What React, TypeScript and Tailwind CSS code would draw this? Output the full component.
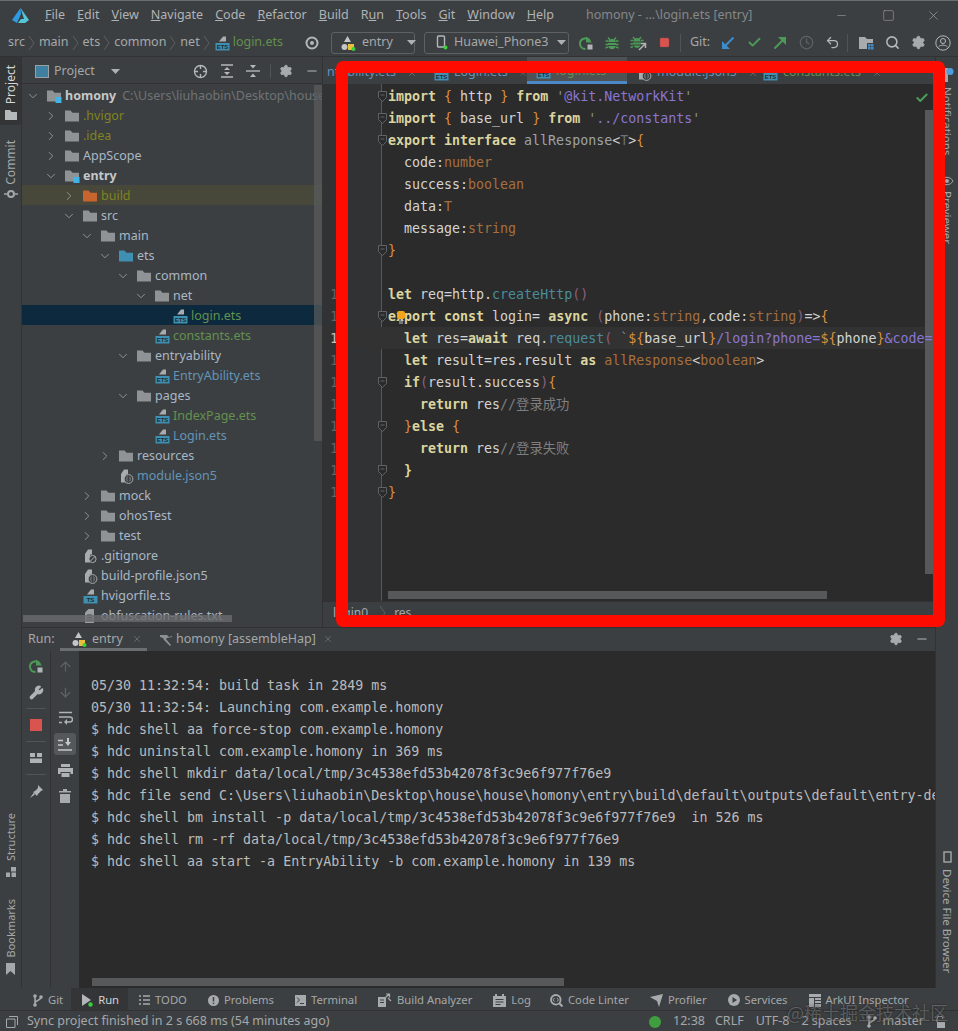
import type { ReactNode } from "react";
import {
  Check,
  ChevronDown,
  ChevronRight,
  Clock,
  Minus,
  Search,
  Settings,
  Undo2,
  X,
  Wrench,
  ArrowUp,
  ArrowDown,
  Square,
} from "lucide-react";

const uiFont = "[font-family:'Noto_Sans','Liberation_Sans',sans-serif]";
const monoFont =
  "[font-family:'DejaVu_Sans_Mono','Noto_Sans_CJK_SC',monospace]";

const Folder = ({ color = "#8f9396", badge }: { color?: string; badge?: boolean }) => (
  <svg width="16" height="14" viewBox="0 0 16 14" className="shrink-0">
    <path d="M1 1.5h5.5l2 2.2H15v8.8H1z" fill={color} />
    {badge && <rect x="9.5" y="8" width="6" height="6" fill="#3fb4e5" />}
  </svg>
);

const EtsIcon = ({ label = "ETS" }: { label?: string }) => (
  <svg width="15" height="16" viewBox="0 0 15 16" className="shrink-0">
    <path d="M4 6.5 8 1.5h3v5z" fill="#a8acae" />
    <rect x="0.5" y="8" width="14" height="7.5" fill="#3f8fb2" />
    <text x="7.5" y="14" textAnchor="middle" fontSize="6" fontWeight="700" fill="#1f2a30" fontFamily="Liberation Sans">
      {label}
    </text>
  </svg>
);

const JsonIcon = () => (
  <svg width="15" height="16" viewBox="0 0 15 16" className="shrink-0">
    <path d="M2 6 5 1.5h4v5H7v8H2z" fill="#a8acae" />
    <circle cx="9.5" cy="11" r="4.4" fill="#3c3f41" stroke="#a8acae" strokeWidth="1" />
    <path d="M8.5 8.8c-1 0-.4 2.2-1 2.2.6 0 0 2.2 1 2.2M10.5 8.8c1 0 .4 2.2 1 2.2-.6 0 0 2.2-1 2.2" fill="none" stroke="#a8acae" strokeWidth=".7" />
  </svg>
);

const IgnoreIcon = () => (
  <svg width="15" height="16" viewBox="0 0 15 16" className="shrink-0">
    <path d="M2 6 5 1.5h4v5H7v8H2z" fill="#a8acae" />
    <circle cx="9.5" cy="11" r="3.6" fill="#3c3f41" stroke="#a8acae" strokeWidth="1" />
    <path d="m7 13.5 5-5" stroke="#a8acae" />
  </svg>
);

const TxtIcon = () => (
  <svg width="14" height="16" viewBox="0 0 14 16" className="shrink-0">
    <path d="M2 4.5 5.5 1H11v14H2z" fill="#9b9fa1" />
    <path d="M4 7h5M4 9.5h5M4 12h5" stroke="#3c3f41" />
  </svg>
);

const ChevronSep = () => (
  <svg width="8" height="16" viewBox="0 0 8 16" className="mx-[3px] shrink-0">
    <path d="m1 1 5 7-5 7" fill="none" stroke="#5c6063" />
  </svg>
);

const RerunIcon = () => (
  <svg width="16" height="16" viewBox="0 0 16 16">
    <path d="M12 6.2A5.3 5.3 0 1 0 7.5 14" fill="none" stroke="#4c9a58" strokeWidth="2" />
    <path d="M8 1.5v6h6z" fill="#4c9a58" />
    <rect x="9.5" y="9.5" width="5" height="5" fill="#b0b3b5" />
  </svg>
);

const BugIcon = () => (
  <svg width="16" height="16" viewBox="0 0 16 16">
    <ellipse cx="8" cy="9" rx="4.3" ry="5.2" fill="#4c9a58" />
    <path d="M4 2.5 6 5M12 2.5 10 5M1.5 6H4M1.5 9.5H4M1.5 13 4 12M14.5 6H12M14.5 9.5H12M14.5 13 12 12" stroke="#4c9a58" strokeWidth="1.4" />
    <path d="M4 7.5h8M4 10.5h8" stroke="#3c3f41" />
  </svg>
);

const ProfileBugIcon = () => (
  <svg width="17" height="16" viewBox="0 0 17 16">
    <ellipse cx="7" cy="8" rx="4" ry="5" fill="#4c9a58" />
    <path d="M3 2 5 4.500M11 2 9 4.500M0.500 5.500H3M0.500 9H3M0.500 12.500 3 11.500M13.500 5.500H11" stroke="#4c9a58" strokeWidth="1.400" />
    <path d="M3 7h8M3 10h8" stroke="#3c3f41" />
    <path d="m9 15 6-6M11 8.500h4.500V13" fill="none" stroke="#b0b3b5" strokeWidth="1.500" />
  </svg>
);

const GearIcon = ({ size = 15 }: { size?: number }) => (
  <Settings size={size} fill="#a8abad" stroke="#a8abad" strokeWidth={1.5} className="shrink-0" />
);

const ComboCaret = () => (
  <svg width="9" height="5" viewBox="0 0 9 5" className="shrink-0">
    <path d="M0 0h9L4.500 5z" fill="#aeb1b3" />
  </svg>
);

const EntryIcon = () => (
  <svg width="15" height="16" viewBox="0 0 15 16" className="shrink-0">
    <path d="M6.500 1 10 7H3z" fill="#c3c5c7" />
    <circle cx="3.500" cy="12" r="3" fill="#c3c5c7" />
    <rect x="7" y="9" width="6" height="6" fill="#e8bf3c" />
    <circle cx="12.500" cy="14" r="2" fill="#39d03b" />
  </svg>
);

const VerticalText = ({
  children,
  up = true,
  bright,
  size = "text-[12px]",
}: {
  children: ReactNode;
  up?: boolean;
  bright?: boolean;
  size?: string;
}) => (
  <span
    className={`[writing-mode:vertical-rl] whitespace-nowrap leading-[14px] ${size} ${
      up ? "rotate-180" : ""
    } ${bright ? "text-[#d4d6d8]" : "text-[#a5a8aa]"}`}
  >
    {children}
  </span>
);

const LeftStrip = () => (
  <div className="flex h-full w-[22px] shrink-0 flex-col items-center border-r border-[#323232]">
    <div className="flex h-[68px] w-full flex-col items-center bg-[#333537] pt-[8px]">
      <VerticalText bright>Project</VerticalText>
      <svg width="14" height="12" viewBox="0 0 14 12" className="mt-[5px]">
        <path d="M1 1h5l1.500 2H13v8H1z" fill="#b6b9bb" />
      </svg>
    </div>
    <div className="mt-[15px] flex flex-col items-center">
      <VerticalText>Commit</VerticalText>
      <svg width="14" height="10" viewBox="0 0 14 10" className="mt-[4px]">
        <circle cx="7" cy="5" r="3" fill="none" stroke="#a5a8aa" strokeWidth="2" />
        <path d="M0 5h3M11 5h3" stroke="#a5a8aa" strokeWidth="1.500" />
      </svg>
    </div>
    <div className="mt-auto mb-[13px] flex flex-col items-center">
      <VerticalText size="text-[11px]">Structure</VerticalText>
      <svg width="12" height="10" viewBox="0 0 12 10" className="mt-[6px]">
        <path d="M6 0h5v4.500H6zM1 5.500h4V10H1zM6.500 5.500H11V10H6.500z" fill="#a5a8aa" />
      </svg>
      <div className="mt-[22px] flex">
        <VerticalText size="text-[11px]">Bookmarks</VerticalText>
      </div>
      <svg width="11" height="12" viewBox="0 0 11 12" className="mt-[6px]">
        <path d="M1 0h9v12L5.500 8 1 12z" fill="#a5a8aa" />
      </svg>
    </div>
  </div>
);

const RightStrip = () => (
  <div className="flex h-full w-[23px] shrink-0 flex-col items-center border-l border-[#323232] pt-[11px]">
    <svg width="14" height="14" viewBox="0 0 14 14">
      <path d="M1 4 4 0h4v14H1z" fill="#a5a8aa" />
      <circle cx="10" cy="3.500" r="3.500" fill="#4d9ee0" />
    </svg>
    <div className="mt-[5px] flex">
      <VerticalText up={false} size="text-[11.5px]">Notifications</VerticalText>
    </div>
    <svg width="14" height="10" viewBox="0 0 14 10" className="mt-[21px]">
      <path d="M1 5c3-5 9-5 12 0-3 5-9 5-12 0z" fill="none" stroke="#a5a8aa" />
      <circle cx="7" cy="5" r="2" fill="#a5a8aa" />
    </svg>
    <div className="mt-[5px] flex">
      <VerticalText up={false} size="text-[11.5px]">Previewer</VerticalText>
    </div>
    <div className="mt-auto mb-[15px] flex flex-col items-center">
      <svg width="9" height="12" viewBox="0 0 9 12">
        <rect x="1" y="1" width="7" height="10" fill="none" stroke="#a5a8aa" strokeWidth="1.400" />
      </svg>
      <div className="mt-[6px] flex">
        <VerticalText up={false} size="text-[11.5px]">Device File Browser</VerticalText>
      </div>
    </div>
  </div>
);

type TreeItem = {
  name: string;
  level: number;
  open?: boolean;
  icon: ReactNode;
  color?: string;
  bold?: boolean;
  hint?: string;
  rowBg?: string;
};

const grayFolder = <Folder />;
const ignored = "text-[#7f8420]";
const green = "text-[#62914f]";
const blue = "text-[#6394b8]";

const tree: TreeItem[] = [
  { name: "homony", level: 0, open: true, icon: <Folder badge />, bold: true, hint: "C:\\Users\\liuhaobin\\Desktop\\house\\house\\homony" },
  { name: ".hvigor", level: 1, open: false, icon: grayFolder, color: ignored },
  { name: ".idea", level: 1, open: false, icon: grayFolder, color: ignored },
  { name: "AppScope", level: 1, open: false, icon: grayFolder },
  { name: "entry", level: 1, open: true, icon: <Folder badge />, bold: true },
  { name: "build", level: 2, open: false, icon: <Folder color="#c8652f" />, color: ignored, rowBg: "bg-[#47473a]" },
  { name: "src", level: 2, open: true, icon: grayFolder },
  { name: "main", level: 3, open: true, icon: grayFolder },
  { name: "ets", level: 4, open: true, icon: <Folder color="#3f8fb2" /> },
  { name: "common", level: 5, open: true, icon: grayFolder },
  { name: "net", level: 6, open: true, icon: grayFolder },
  { name: "login.ets", level: 7, icon: <EtsIcon />, color: green, rowBg: "bg-[#0d293e]" },
  { name: "constants.ets", level: 6, icon: <EtsIcon />, color: green },
  { name: "entryability", level: 5, open: true, icon: grayFolder },
  { name: "EntryAbility.ets", level: 6, icon: <EtsIcon />, color: blue },
  { name: "pages", level: 5, open: true, icon: grayFolder },
  { name: "IndexPage.ets", level: 6, icon: <EtsIcon />, color: green },
  { name: "Login.ets", level: 6, icon: <EtsIcon />, color: blue },
  { name: "resources", level: 4, open: false, icon: grayFolder },
  { name: "module.json5", level: 4, icon: <JsonIcon />, color: blue },
  { name: "mock", level: 3, open: false, icon: grayFolder },
  { name: "ohosTest", level: 3, open: false, icon: grayFolder },
  { name: "test", level: 3, open: false, icon: grayFolder },
  { name: ".gitignore", level: 2, icon: <IgnoreIcon /> },
  { name: "build-profile.json5", level: 2, icon: <JsonIcon /> },
  { name: "hvigorfile.ts", level: 2, icon: <EtsIcon label="TS" /> },
  { name: "obfuscation-rules.txt", level: 2, icon: <TxtIcon /> },
];

const TreeRow = ({ item }: { item: TreeItem }) => (
  <div
    className={`flex h-[20px] items-center whitespace-nowrap pt-[2px] text-[12.5px] ${item.rowBg ?? ""}`}
    style={{ paddingLeft: 2 + item.level * 18 }}
  >
    <span className="flex w-[18px] shrink-0 justify-center text-[#9a9ea1]">
      {item.open === true && <ChevronDown size={14} strokeWidth={1.5} />}
      {item.open === false && <ChevronRight size={14} strokeWidth={1.5} />}
    </span>
    <span className="ml-[5px] flex w-[14px] shrink-0 justify-center">{item.icon}</span>
    <span className={`ml-[4px] ${item.bold ? "font-bold text-[#c5c7c9]" : ""} ${item.color ?? (item.bold ? "" : "text-[#a9b7c6]")}`}>
      {item.name}
    </span>
    {item.hint && <span className="ml-[6px] text-[#6f7375]">{item.hint}</span>}
  </div>
);

const ProjectPanel = () => (
  <div className="relative flex h-full w-[301px] shrink-0 flex-col overflow-hidden border-r border-[#323232]">
    <div className="flex h-[27px] shrink-0 items-center border-b border-[#323232] pl-[13px] pt-[2px] text-[12.5px] text-[#a5a8aa]">
      <svg width="14" height="13" viewBox="0 0 14 13" className="shrink-0">
        <rect x=".5" y=".5" width="13" height="12" fill="#3f7fa0" stroke="#9aa0a3" />
      </svg>
      <span className="ml-[5px]">Project</span>
      <span className="ml-[16px]">
        <ComboCaret />
      </span>
      <svg width="15" height="15" viewBox="0 0 15 15" className="ml-[73px] shrink-0">
        <circle cx="7.500" cy="7.500" r="6" fill="none" stroke="#b4b7b9" strokeWidth="1.400" />
        <path d="M7.500 1v4M7.500 10v4M1 7.500h4M10 7.500h4" stroke="#b4b7b9" strokeWidth="1.400" />
      </svg>
      <svg width="14" height="14" viewBox="0 0 14 14" className="ml-[12px] shrink-0">
        <path d="M1 1h12M1 13h12" stroke="#b4b7b9" strokeWidth="1.400" />
        <path d="m4 6 3-3 3 3zM4 8l3 3 3-3z" fill="#b4b7b9" />
      </svg>
      <svg width="14" height="14" viewBox="0 0 14 14" className="ml-[12px] shrink-0">
        <path d="M0 7h14" stroke="#b4b7b9" strokeWidth="1.400" />
        <path d="m4 1 3 3.500L10 1zM4 13l3-3.500L10 13z" fill="#b4b7b9" />
      </svg>
      <span className="ml-[10px] h-[14px] w-px bg-[#515456]" />
      <span className="ml-[8px]">
        <GearIcon size={14} />
      </span>
      <Minus size={14} className="ml-[12px] shrink-0 text-[#b4b7b9]" />
    </div>
    <div className="flex flex-col pt-[1px]">
      {tree.map((item) => (
        <TreeRow key={item.name} item={item} />
      ))}
    </div>
    <div className="absolute right-0 top-[28px] h-[356px] w-[8px] bg-[#5a5c5e]/70" />
    <div className="absolute bottom-[5px] left-[1px] h-[7px] w-[209px] bg-[#6a6c6e]/80" />
  </div>
);

const tabs = [
  { name: "ntAbility.ets", w: "w-[107px] pl-[4px]", color: "text-[#6394b8]", icon: null },
  { name: "Login.ets", w: "w-[97px] pl-[4px]", color: "text-[#6394b8]", icon: <EtsIcon /> },
  { name: "login.ets", w: "w-[100px] pl-[9px]", color: "text-[#62914f]", icon: <EtsIcon />, active: true },
  { name: "module.json5", w: "w-[132px] pl-[10px]", color: "text-[#6394b8]", icon: <JsonIcon /> },
  { name: "constants.ets", w: "w-[136px] pl-[4px]", color: "text-[#62914f]", icon: <EtsIcon /> },
];

const kw = "font-bold text-[#dcd49f]";
const plain = "text-[#d4d4d4]";
const brace = "text-[#d98f3c]";
const str = "text-[#8a76d2]";
const quote = "text-[#8a8f93]";
const type = "text-[#a5703f]";
const fn = "text-[#4a8c9c]";
const paren = "text-[#8f5f7c]";
const muted = "text-[#9ea3a8]";
const note = "text-[#7f7f7f]";

type Tok = [string, string];

const code: { toks: Tok[]; fold?: boolean }[] = [
  { fold: true, toks: [["import", kw], [" ", plain], ["{", brace], [" http ", plain], ["}", brace], [" ", plain], ["from", kw], [" ", plain], ["'", quote], ["@kit.NetworkKit", str], ["'", quote]] },
  { fold: true, toks: [["import", kw], [" ", plain], ["{", brace], [" base_url ", plain], ["}", brace], [" ", plain], ["from", kw], [" ", plain], ["'", quote], ["../constants", str], ["'", quote]] },
  { fold: true, toks: [["export interface", kw], [" allResponse", muted], ["<", plain], ["T", "text-[#6a7075]"], [">", plain], ["{", brace]] },
  { toks: [["  code:", plain], ["number", type]] },
  { toks: [["  success:", plain], ["boolean", type]] },
  { toks: [["  data:", plain], ["T", type]] },
  { toks: [["  message:", plain], ["string", type]] },
  { fold: true, toks: [["}", brace]] },
  { toks: [] },
  { toks: [["let", kw], [" req=http.", plain], ["createHttp", fn], ["()", paren]] },
  { fold: true, toks: [["export const", kw], [" login= ", plain], ["async", kw], [" ", plain], ["(", paren], ["phone:", plain], ["string", type], [",code:", plain], ["string", type], [")", paren], ["=>", plain], ["{", brace]] },
  { toks: [["  ", plain], ["let", kw], [" res=", plain], ["await", kw], [" req.", plain], ["request", fn], ["(", paren], [" `", quote], ["${", brace], ["base_url", plain], ["}", brace], ["/login?phone=", str], ["${", brace], ["phone", plain], ["}", brace], ["&code=", str], ["${", brace], ["code", plain], ["}", brace], ["`", quote], [")", paren]] },
  { toks: [["  ", plain], ["let", kw], [" result=res.result ", plain], ["as", kw], [" ", plain], ["allResponse", type], ["<", plain], ["boolean", type], [">", plain]] },
  { fold: true, toks: [["  ", plain], ["if", kw], ["(", paren], ["result.success", plain], [")", paren], ["{", brace]] },
  { toks: [["    ", plain], ["return", kw], [" res", plain], ["//登录成功", note]] },
  { fold: true, toks: [["  ", plain], ["}", brace], ["else", kw], [" ", plain], ["{", brace]] },
  { toks: [["    ", plain], ["return", kw], [" res", plain], ["//登录失败", note]] },
  { fold: true, toks: [["  ", plain], ["}", kw]] },
  { fold: true, toks: [["}", brace]] },
];

const FoldMark = () => (
  <svg width="9" height="11" viewBox="0 0 9 11" className="absolute left-[55px] top-[6px]">
    <path d="M.5 .5h8v6l-4 4-4-4z" fill="#2b2b2b" stroke="#5f6365" />
    <path d="M2.500 4h4" stroke="#5f6365" />
  </svg>
);

const Editor = () => (
  <div className="relative flex h-full min-w-0 flex-1 flex-col overflow-hidden">
    <div className="flex h-[27px] shrink-0 items-center text-[12.5px]">
      {tabs.map((t) => (
        <div
          key={t.name}
          className={`flex h-full shrink-0 items-center gap-[5px] whitespace-nowrap pt-[4px] ${t.w} ${
            t.active ? "border-b-[3px] border-[#4a88c7] bg-[#4e5254]" : ""
          } ${t.color}`}
        >
          {t.icon}
          <span>{t.name}</span>
          {!t.active && <X size={10} className="ml-[6px] text-[#6f7375]" />}
        </div>
      ))}
    </div>
    <div className={`relative flex-1 overflow-hidden bg-[#2b2b2b] text-[13.3px] leading-[22px] ${monoFont}`}>
      <div className="absolute bottom-0 left-0 top-0 w-[59px] border-r border-[#555759] bg-[#303234]" />
      {/* right scrollbar sits under the code, the long line runs over it */}
      <div className="absolute right-[2px] top-[26px] h-[464px] w-[8px] bg-[#565859]" />
      <div className="relative h-[517px] overflow-hidden pt-[1px]">
        {code.map((line, i) => (
          <div key={i} className={`relative mr-[10px] flex h-[22px] whitespace-pre ${i === 11 ? "bg-[#323232]" : ""}`}>
            <span className={`relative top-[1px] w-[23px] shrink-0 text-right ${i === 11 ? "text-[#c0c0c0]" : "text-[#5f6365]"}`}>
              {i + 1}
            </span>
            <span className="w-[42px] shrink-0" />
            {line.fold && <FoldMark />}
            <span className="relative top-[1px]">
              {line.toks.map((t, j) => (
                <span key={j} className={t[1]}>
                  {t[0]}
                </span>
              ))}
            </span>
            {i === 10 && (
              <svg width="10" height="14" viewBox="0 0 10 14" className="absolute left-[73px] top-[5px]">
                <rect x="1" y="1" width="8" height="8" rx="2" fill="#f2a51a" />
                <path d="M3 11h4M3 13h4" stroke="#c4c4c4" />
              </svg>
            )}
          </div>
        ))}
      </div>
      <Check size={14} strokeWidth={3.5} className="absolute right-[6px] top-[7px] text-[#4c9a58]" />
      <div className="absolute bottom-[2px] left-[65px] h-[8px] w-[439px] bg-[#565859]" />
    </div>
    <div className={`flex h-[26px] shrink-0 items-center border-t border-[#323232] pb-[4px] pl-[10px] text-[12px] text-[#a5a8aa] ${uiFont}`}>
      <span>login0</span>
      <span className="ml-[8px] mr-[4px]">
        <ChevronSep />
      </span>
      <span>res</span>
    </div>
  </div>
);

const consoleLines = [
  "05/30 11:32:54: build task in 2849 ms",
  "05/30 11:32:54: Launching com.example.homony",
  "$ hdc shell aa force-stop com.example.homony",
  "$ hdc uninstall com.example.homony in 369 ms",
  "$ hdc shell mkdir data/local/tmp/3c4538efd53b42078f3c9e6f977f76e9",
  "$ hdc file send C:\\Users\\liuhaobin\\Desktop\\house\\house\\homony\\entry\\build\\default\\outputs\\default\\entry-default-signed.hap",
  "$ hdc shell bm install -p data/local/tmp/3c4538efd53b42078f3c9e6f977f76e9  in 526 ms",
  "$ hdc shell rm -rf data/local/tmp/3c4538efd53b42078f3c9e6f977f76e9",
  "$ hdc shell aa start -a EntryAbility -b com.example.homony in 139 ms",
];

const IconSlot = ({ children, selected }: { children: ReactNode; selected?: boolean }) => (
  <div className={`flex h-[26px] w-full items-center justify-center ${selected ? "px-[3px] py-[2px]" : ""}`}>
    <div className={`flex h-full w-full items-center justify-center ${selected ? "rounded-[3px] bg-[#55585a]" : ""}`}>
      {children}
    </div>
  </div>
);

const SlotDivider = () => (
  <div className="flex h-[7px] w-full items-center justify-center">
    <div className="h-px w-[20px] bg-[#515456]" />
  </div>
);

const RunPanel = () => (
  <div className="flex h-[361px] shrink-0 flex-col border-t border-[#323232]">
    <div className="flex h-[23px] shrink-0 items-center pb-[1px] pl-[6px] text-[12.5px] text-[#a5a8aa]">
      <span className="w-[44px]">Run:</span>
      <div className="relative flex h-full w-[76px] shrink-0 items-center gap-[5px]">
        <EntryIcon />
        <span>entry</span>
        <X size={10} className="ml-[4px] text-[#6f7375]" />
        <div className="absolute bottom-[-1px] left-[-12px] h-[3px] w-[87px] bg-[#6b6e70]" />
      </div>
      <svg width="14" height="14" viewBox="0 0 14 14" className="ml-[11px] shrink-0">
        <path d="M1 3h7l2 2 3-1 0 1-5 1-1 1 5 6-1 1-6-6-1-2-3-1z" fill="#8d9092" />
      </svg>
      <span className="ml-[3px] whitespace-nowrap">homony [assembleHap]</span>
      <X size={10} className="ml-[7px] text-[#6f7375]" />
      <span className="ml-auto mr-[12px]">
        <GearIcon size={14} />
      </span>
      <Minus size={14} strokeWidth={2} className="mr-[6px] shrink-0 text-[#b4b7b9]" />
    </div>
    <div className="flex min-h-0 flex-1">
      <div className="flex w-[29px] shrink-0 flex-col items-center border-r border-[#323232] pt-[2px]">
        <IconSlot>
          <RerunIcon />
        </IconSlot>
        <IconSlot>
          <Wrench size={15} fill="#b0b3b5" stroke="#b0b3b5" />
        </IconSlot>
        <SlotDivider />
        <IconSlot>
          <svg width="12" height="12" viewBox="0 0 12 12">
            <rect width="12" height="12" fill="#d9534f" />
          </svg>
        </IconSlot>
        <SlotDivider />
        <IconSlot>
          <svg width="14" height="12" viewBox="0 0 14 12">
            <path d="M1 1h5v4H1zM8 1h5v4H8zM1 6.500h12V11H1z" fill="#b0b3b5" />
          </svg>
        </IconSlot>
        <SlotDivider />
        <IconSlot>
          <svg width="15" height="15" viewBox="0 0 15 15">
            <path d="M9 1l5 5-2 1-3 3-1 2-4-4 2-1 3-3zM4.500 9 1 14l5-3.500z" fill="#b0b3b5" />
          </svg>
        </IconSlot>
      </div>
      <div className="flex w-[28px] shrink-0 flex-col items-center pt-[2px]">
        <IconSlot>
          <ArrowUp size={15} className="text-[#5f6264]" />
        </IconSlot>
        <IconSlot>
          <ArrowDown size={15} className="text-[#5f6264]" />
        </IconSlot>
        <IconSlot>
          <svg width="15" height="14" viewBox="0 0 15 14">
            <path d="M1 1.500h13M1 6h11a2.500 2.500 0 0 1 0 5H8M1 11.500h3" fill="none" stroke="#b0b3b5" strokeWidth="1.500" />
            <path d="M9 8v6l-3-3z" fill="#b0b3b5" />
          </svg>
        </IconSlot>
        <IconSlot selected>
          <svg width="14" height="13" viewBox="0 0 14 13">
            <path d="M0 2.500h5M0 7h5M0 12h14" stroke="#c4c6c8" strokeWidth="1.500" />
            <path d="M9 0h2v4h2l-3 4-3-4h2z" fill="#c4c6c8" />
          </svg>
        </IconSlot>
        <IconSlot>
          <svg width="15" height="14" viewBox="0 0 15 14">
            <path d="M3 1h9v3H3zM0 5h15v6h-2.500V9h-10v2H0zM3.500 10h8v4h-8z" fill="#b0b3b5" />
          </svg>
        </IconSlot>
        <IconSlot>
          <svg width="12" height="14" viewBox="0 0 12 14">
            <path d="M0 2h4V0h4v2h4v1.500H0zM1 5h10v9H1z" fill="#a8abad" />
          </svg>
        </IconSlot>
      </div>
      <div className={`relative min-w-0 flex-1 overflow-hidden bg-[#2b2b2b] pl-[12px] pt-[24px] text-[13.3px] leading-[22px] text-[#bbbbbb] ${monoFont}`}>
        {consoleLines.map((line) => (
          <div key={line} className="whitespace-pre">
            {line}
          </div>
        ))}
        <div className="absolute bottom-[2px] left-[13px] h-[8px] w-[472px] bg-[#565859]" />
      </div>
    </div>
  </div>
);

const NavBar = () => (
  <div className="flex h-[29px] shrink-0 items-center border-b border-[#323232] pl-[8px] pt-[1px] text-[12.5px] text-[#a5a8aa]">
    {["src", "main", "ets", "common", "net"].map((s) => (
      <div key={s} className="flex items-center">
        <span>{s}</span>
        <ChevronSep />
      </div>
    ))}
    <span className="ml-[1px]">
      <EtsIcon />
    </span>
    <span className="ml-[3px] text-[#62914f]">login.ets</span>
    <svg width="14" height="14" viewBox="0 0 14 14" className="ml-[22px] shrink-0">
      <circle cx="7" cy="7" r="5.500" fill="none" stroke="#b4b7b9" strokeWidth="2" />
      <circle cx="7" cy="7" r="2" fill="#b4b7b9" />
    </svg>
    <div className="ml-[12px] flex h-[22px] w-[84px] shrink-0 items-center gap-[6px] rounded-[3px] border border-[#5e6163] pl-[9px]">
      <EntryIcon />
      <span>entry</span>
      <span className="ml-[8px]">
        <ComboCaret />
      </span>
    </div>
    <div className="ml-[9px] flex h-[22px] w-[145px] shrink-0 items-center gap-[6px] rounded-[3px] border border-[#5e6163] pl-[11px]">
      <svg width="12" height="15" viewBox="0 0 12 15" className="shrink-0">
        <rect x="1.500" y="1" width="7" height="11" rx="1" fill="none" stroke="#b4b7b9" strokeWidth="1.400" />
        <circle cx="9.500" cy="12.500" r="2" fill="#39d03b" />
      </svg>
      <span className="whitespace-nowrap">Huawei_Phone3</span>
      <span className="ml-[3px]">
        <ComboCaret />
      </span>
    </div>
    <span className="ml-[9px]">
      <RerunIcon />
    </span>
    <span className="ml-[10px]">
      <BugIcon />
    </span>
    <span className="ml-[10px]">
      <ProfileBugIcon />
    </span>
    <Square size={11} fill="#d9534f" stroke="#d9534f" className="ml-[12px] shrink-0" />
    <span className="ml-[10px] h-[18px] w-px bg-[#515456]" />
    <span className="ml-[9px]">Git:</span>
    <svg width="14" height="14" viewBox="0 0 14 14" className="ml-[11px] shrink-0">
      <path d="M12.500 1.500 3 11" stroke="#3f8ccb" strokeWidth="2" />
      <path d="M1 5v8h8z" fill="#3f8ccb" />
    </svg>
    <Check size={15} strokeWidth={3} className="ml-[12px] shrink-0 text-[#4c9a58]" />
    <svg width="14" height="14" viewBox="0 0 14 14" className="ml-[11px] shrink-0">
      <path d="M1.500 12.500 11 3" stroke="#4c9a58" strokeWidth="2" />
      <path d="M5 1h8v8z" fill="#4c9a58" />
    </svg>
    <Clock size={15} className="ml-[12px] shrink-0 text-[#5f6264]" />
    <Undo2 size={15} strokeWidth={2} className="ml-[11px] shrink-0 text-[#b4b7b9]" />
    <span className="ml-[7px] h-[18px] w-px bg-[#515456]" />
    <svg width="15" height="14" viewBox="0 0 15 14" className="ml-[11px] shrink-0">
      <path d="M0 1h6l2 2h6v4H8v6H0z" fill="#a8abad" />
      <path d="M9 8h2.500v2.500H9zM12 8h2.500v2.500H12zM9 11h2.500v2.500H9zM12 11h2.500v2.500H12z" fill="#3f8ccb" />
    </svg>
    <Search size={15} strokeWidth={2.5} className="ml-[11px] shrink-0 text-[#b4b7b9]" />
    <span className="ml-[11px]">
      <GearIcon />
    </span>
    <svg width="16" height="16" viewBox="0 0 16 16" className="ml-[9px] shrink-0">
      <circle cx="8" cy="8" r="7.200" fill="none" stroke="#b4b7b9" />
      <circle cx="8" cy="6" r="2.500" fill="none" stroke="#b4b7b9" />
      <path d="M3.500 12c2-2.500 7-2.500 9 0" fill="none" stroke="#b4b7b9" />
    </svg>
  </div>
);

const menus = [
  ["F", "ile"],
  ["E", "dit"],
  ["V", "iew"],
  ["N", "avigate"],
  ["C", "ode"],
  ["R", "efactor"],
  ["B", "uild"],
  ["R", "un", "u"],
  ["T", "ools"],
  ["G", "it"],
  ["W", "indow"],
  ["H", "elp"],
];

const TitleBar = () => (
  <div className="flex h-[28px] shrink-0 items-center border-t border-[#6a6c6e] pl-[12px] pt-[1px] text-[12.5px] text-[#b0b3b5]">
    <svg width="17" height="15" viewBox="0 0 17 15" className="shrink-0">
      <path d="M8.500 0 0 12l5 3 4-9z" fill="#2e9be0" />
      <path d="M8.500 0 17 12l-4 3H6l3-4h3z" fill="#55c6d8" />
    </svg>
    <div className="ml-[16px] flex gap-[12px]">
      {menus.map((m) =>
        m[2] ? (
          <span key={m.join("")}>
            R<span className="underline">u</span>n
          </span>
        ) : (
          <span key={m.join("")}>
            <span className="underline">{m[0]}</span>
            {m[1]}
          </span>
        ),
      )}
    </div>
    <span className="ml-[32px] whitespace-nowrap text-[#85888a]">homony - ...\login.ets [entry]</span>
    <Minus size={13} strokeWidth={1} className="ml-auto text-[#a8abad]" />
    <Square size={13} strokeWidth={1} className="ml-[34px] text-[#a8abad]" />
    <X size={15} strokeWidth={1} className="ml-[31px] mr-[17px] text-[#a8abad]" />
  </div>
);

const tools: { name: string; icon: ReactNode; active?: boolean; pr?: string }[] = [
  {
    name: "Git",
    pr: "pr-[8px]",
    icon: (
      <svg width="10" height="13" viewBox="0 0 10 13">
        <circle cx="2" cy="2" r="1.800" fill="#a8abad" />
        <circle cx="2" cy="11" r="1.800" fill="#a8abad" />
        <circle cx="8" cy="3" r="1.800" fill="#a8abad" />
        <path d="M2 2v9M8 3c0 4-6 3-6 6" fill="none" stroke="#a8abad" strokeWidth="1.500" />
      </svg>
    ),
  },
  {
    name: "Run",
    active: true,
    pr: "pr-[9px]",
    icon: (
      <svg width="11" height="13" viewBox="0 0 11 13">
        <path d="M0 0l9 6-9 6z" fill="#b4b7b9" />
        <circle cx="8.500" cy="10.500" r="2.200" fill="#39d03b" />
      </svg>
    ),
  },
  {
    name: "TODO",
    icon: (
      <svg width="11" height="10" viewBox="0 0 11 10">
        <path d="M0 1h2M4 1h7M0 5h2M4 5h7M0 9h2M4 9h7" stroke="#a8abad" strokeWidth="1.500" />
      </svg>
    ),
  },
  {
    name: "Problems",
    icon: (
      <svg width="11" height="11" viewBox="0 0 11 11">
        <circle cx="5.500" cy="5.500" r="5.500" fill="#a8abad" />
        <path d="M5.500 2v4.500M5.500 7.700v1.300" stroke="#3c3f41" strokeWidth="1.500" />
      </svg>
    ),
  },
  {
    name: "Terminal",
    icon: (
      <svg width="11" height="11" viewBox="0 0 11 11">
        <rect width="11" height="11" fill="#a8abad" />
        <path d="m2 2.500 2.500 2.500L2 7.500M5 8.500h4" fill="none" stroke="#3c3f41" />
      </svg>
    ),
  },
  {
    name: "Build Analyzer",
    icon: (
      <svg width="14" height="14" viewBox="0 0 14 14">
        <path d="M0 4h8v10H0z" fill="#a8abad" />
        <path d="M2 7h4M2 9.500h4" stroke="#3c3f41" />
        <path d="m7 5 4-4M8 1h3.500v3.500M10 5l3 3" fill="none" stroke="#a8abad" strokeWidth="1.200" />
      </svg>
    ),
  },
  {
    name: "Log",
    pr: "pr-[8px]",
    icon: (
      <svg width="13" height="13" viewBox="0 0 13 13">
        <path d="M0 2h2V0h2v2h5V0h2v2h2v11H0z" fill="#a8abad" />
        <path d="M2.500 5.500h8M2.500 8h8M2.500 10.500h5" stroke="#3c3f41" />
      </svg>
    ),
  },
  {
    name: "Code Linter",
    icon: (
      <svg width="13" height="13" viewBox="0 0 13 13">
        <circle cx="5.800" cy="5.800" r="4.800" fill="none" stroke="#a8abad" strokeWidth="1.800" />
        <path d="m9 9 3.500 3.500" stroke="#a8abad" strokeWidth="2" />
        <path d="M4.500 4 3 5.800l1.500 1.800M7 4l1.500 1.800L7 7.600" fill="none" stroke="#a8abad" />
      </svg>
    ),
  },
  {
    name: "Profiler",
    icon: (
      <svg width="13" height="13" viewBox="0 0 13 13">
        <path d="M0 3 13 0 9 13 7 7z" fill="#a8abad" />
      </svg>
    ),
  },
  {
    name: "Services",
    icon: (
      <svg width="12" height="12" viewBox="0 0 12 12">
        <circle cx="6" cy="6" r="6" fill="#a8abad" />
        <path d="M4.500 3 9 6l-4.500 3z" fill="#3c3f41" />
      </svg>
    ),
  },
  {
    name: "ArkUI Inspector",
    icon: (
      <svg width="12" height="13" viewBox="0 0 12 13">
        <path d="M0 0h12v3H0zM0 4h5v9H0zM6 4h6v2H6zM6 7h6v2H6zM6 10h6v3H6z" fill="#a8abad" />
      </svg>
    ),
  },
];

const ToolBar = () => (
  <div className="flex h-[22px] shrink-0 items-center pl-[22px] text-[11.25px] text-[#a5a8aa]">
    {tools.map((t) => (
      <div
        key={t.name}
        className={`flex h-full items-center gap-[5px] whitespace-nowrap pl-[11px] pt-[2px] ${t.pr ?? "pr-[10px]"} ${t.active ? "bg-[#333536] text-[#d4d6d8]" : ""}`}
      >
        {t.icon}
        <span>{t.name}</span>
      </div>
    ))}
  </div>
);

const StatusBar = () => (
  <div className="relative flex h-[21px] shrink-0 items-center border-t border-[#323232] pl-[6px] pt-[1px] text-[12.5px] text-[#a5a8aa]">
    <svg width="12" height="12" viewBox="0 0 12 12" className="shrink-0">
      <path d="M3 .5h8.500V9M.5 3h8.500v8.500H.5z" fill="none" stroke="#a5a8aa" />
    </svg>
    <span className="ml-[9px] whitespace-nowrap">Sync project finished in 2 s 668 ms (54 minutes ago)</span>
    <span className="ml-auto h-[12px] w-[12px] shrink-0 rounded-full bg-[#3f9e3f]" />
    <span className="ml-[12px]">12:38</span>
    <span className="ml-[10px]">CRLF</span>
    <span className="ml-[12px]">UTF-8</span>
    <span className="ml-[12px] whitespace-nowrap">2 spaces</span>
    <svg width="10" height="13" viewBox="0 0 10 13" className="ml-[15px] shrink-0">
      <circle cx="2" cy="2" r="1.800" fill="#a8abad" />
      <circle cx="2" cy="11" r="1.800" fill="#a8abad" />
      <circle cx="8" cy="3" r="1.800" fill="#a8abad" />
      <path d="M2 2v9M8 3c0 4-6 3-6 6" fill="none" stroke="#a8abad" strokeWidth="1.500" />
    </svg>
    <span className="ml-[6px]">master</span>
    <svg width="12" height="12" viewBox="0 0 12 12" className="ml-[10px] mr-[12px] shrink-0">
      <path d="M3 6V3a3 3 0 0 1 6 0" fill="none" stroke="#a8abad" />
      <rect x="3" y="6" width="8" height="6" fill="#a8abad" />
    </svg>
    <span className="pointer-events-none absolute bottom-[7px] right-[10px] whitespace-nowrap text-[18px] leading-[24px] text-white/25 [font-family:'Noto_Sans_CJK_SC',sans-serif] [text-shadow:0_0_2px_rgba(0,0,0,0.6)]">
      @稀土掘金技术社区
    </span>
  </div>
);

export default function App() {
  return (
    <div className={`relative flex h-[1031px] w-[958px] flex-col overflow-hidden bg-[#3c3f41] ${uiFont}`}>
      <TitleBar />
      <NavBar />
      <div className="flex min-h-0 flex-1">
        <LeftStrip />
        <div className="flex min-w-0 flex-1 flex-col">
          <div className="flex min-h-0 flex-1">
            <ProjectPanel />
            <Editor />
          </div>
          <RunPanel />
        </div>
        <RightStrip />
      </div>
      <ToolBar />
      <StatusBar />
      {/* annotation box drawn over the screenshot */}
      <div className="pointer-events-none absolute left-[336px] top-[61px] h-[566px] w-[609px] rounded-[7px] border-[12px] border-[#ff0b00]" />
    </div>
  );
}
